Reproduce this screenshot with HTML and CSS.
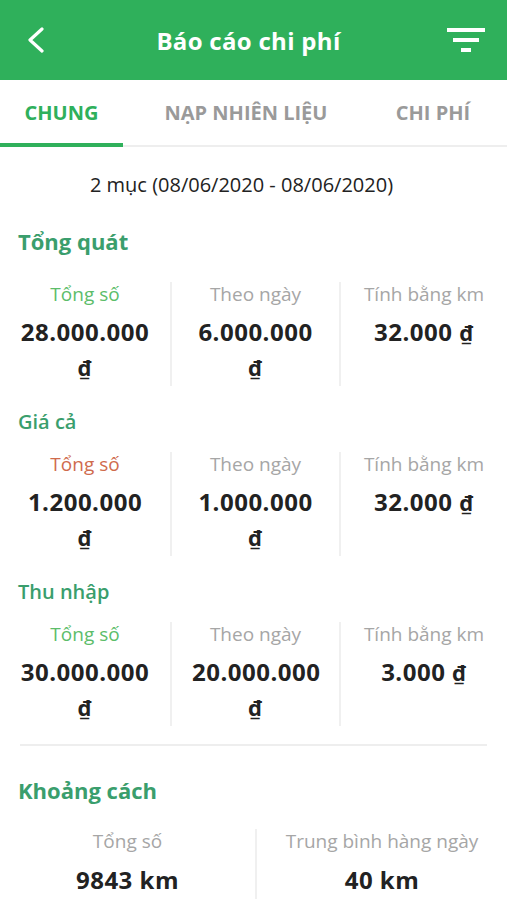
FILE: index.html
```html
<!DOCTYPE html>
<html lang="vi">
<head>
    <meta charset="UTF-8">
    <meta name="viewport" content="width=device-width, initial-scale=1.0">
    <title>Báo cáo chi phí</title>
    <link rel="stylesheet" href="styles.css">
</head>
<body>
    <header class="topbar">
        <svg class="back" width="20" height="26" viewBox="0 0 20 26">
            <path d="M16 2 L4 13 L16 24" fill="none" stroke="#fff" stroke-width="3.2" stroke-linecap="round" stroke-linejoin="round"/>
        </svg>
        <h1>Báo cáo chi phí</h1>
        <svg class="filter" width="40" height="26" viewBox="0 0 40 26">
            <rect x="0" y="0" width="38" height="4" fill="#fff"/>
            <rect x="6" y="10" width="26" height="4" fill="#fff"/>
            <rect x="14" y="20" width="10" height="4" fill="#fff"/>
        </svg>
    </header>

    <nav class="tabs">
        <div class="tab active">CHUNG</div>
        <div class="tab">NẠP NHIÊN LIỆU</div>
        <div class="tab">CHI PHÍ</div>
    </nav>

    <p class="range">2 mục (08/06/2020 - 08/06/2020)</p>

    <h2 class="section-title">Tổng quát</h2>
    <div class="stats">
        <div class="stat">
            <div class="label green">Tổng số</div>
            <div class="value">28.000.000 <span class="cur">₫</span></div>
        </div>
        <div class="stat">
            <div class="label">Theo ngày</div>
            <div class="value">6.000.000 <span class="cur">₫</span></div>
        </div>
        <div class="stat">
            <div class="label">Tính bằng km</div>
            <div class="value">32.000 <span class="cur">₫</span></div>
        </div>
    </div>

    <h3 class="sub-title">Giá cả</h3>
    <div class="stats">
        <div class="stat">
            <div class="label red">Tổng số</div>
            <div class="value">1.200.000 <span class="cur">₫</span></div>
        </div>
        <div class="stat">
            <div class="label">Theo ngày</div>
            <div class="value">1.000.000 <span class="cur">₫</span></div>
        </div>
        <div class="stat">
            <div class="label">Tính bằng km</div>
            <div class="value">32.000 <span class="cur">₫</span></div>
        </div>
    </div>

    <h3 class="sub-title">Thu nhập</h3>
    <div class="stats">
        <div class="stat">
            <div class="label green">Tổng số</div>
            <div class="value">30.000.000 <span class="cur">₫</span></div>
        </div>
        <div class="stat">
            <div class="label">Theo ngày</div>
            <div class="value">20.000.000 <span class="cur">₫</span></div>
        </div>
        <div class="stat">
            <div class="label">Tính bằng km</div>
            <div class="value">3.000 <span class="cur">₫</span></div>
        </div>
    </div>

    <hr class="sep">

    <h2 class="section-title">Khoảng cách</h2>
    <div class="stats two">
        <div class="stat">
            <div class="label">Tổng số</div>
            <div class="value">9843 km</div>
        </div>
        <div class="stat">
            <div class="label">Trung bình hàng ngày</div>
            <div class="value">40 km</div>
        </div>
    </div>
</body>
</html>
```

FILE: styles.css
```css
body {
    margin: 0;
    font-family: "Open Sans", "Noto Sans", sans-serif;
    background-color: #fff;
    color: #222;
}
.topbar {
    height: 80px;
    background-color: #2fb05b;
    display: flex;
    align-items: center;
    justify-content: space-between;
    padding: 0 20px 0 26px;
}
.topbar h1 {
    margin: 0;
    color: #fff;
    font-size: 24px;
    font-weight: 700;
    letter-spacing: 0.3px;
    position: relative;
    left: 2px;
}
.back {
    display: block;
}
.filter {
    display: block;
    margin-top: 2px;
}
.tabs {
    display: flex;
    height: 65px;
    border-bottom: 2px solid #eeeeee;
}
.tab {
    display: flex;
    align-items: center;
    justify-content: center;
    font-size: 20px;
    font-weight: 700;
    color: #9a9a9a;
    border-bottom: 4px solid transparent;
    margin-bottom: -2px;
    padding-top: 2px;
}
.tab:nth-child(1) {
    flex: 0 0 123px;
}
.tab:nth-child(2) {
    flex: 0 0 246px;
}
.tab:nth-child(3) {
    flex: 1;
    padding-right: 10px;
}
.tab.active {
    color: #2fb05b;
    border-bottom-color: #2fb05b;
}
.range {
    margin: 26px 0 0;
    text-align: center;
    font-size: 20px;
    line-height: 24px;
    position: relative;
    left: -12px;
}
.section-title {
    margin: 30px 18px 0;
    font-size: 22px;
    line-height: 28px;
    font-weight: 700;
    color: #3a9e6d;
}
.sep + .section-title {
    margin-top: 30px;
}
.sub-title {
    margin: 23px 18px 0;
    font-size: 20px;
    line-height: 26px;
    font-weight: 600;
    color: #3a9e6d;
}
.stats {
    display: grid;
    grid-template-columns: 172px 169px 1fr;
    margin-top: 17px;
}
.section-title + .stats {
    margin-top: 27px;
}
.stats.two {
    grid-template-columns: 257px 1fr;
    margin-top: 25px;
}
.stat {
    text-align: center;
    border-right: 2px solid #f0f0f0;
    padding: 0 20px;
    min-height: 104px;
}
.stats.two .stat {
    min-height: 70px;
}
.stat:last-child {
    border-right: none;
}
.label {
    font-size: 19px;
    line-height: 24px;
    color: #a6a6a6;
}
.label.green {
    color: #5cbd6a;
}
.label.red {
    color: #cf6b4d;
}
.value {
    font-size: 24px;
    font-weight: 700;
    line-height: 35px;
    letter-spacing: 0.5px;
    margin-top: 8px;
    color: #222;
}
.stats.two .value {
    margin-top: 9px;
}
.cur {
    font-size: 22px;
}
.sep {
    border: none;
    border-top: 2px solid #eeeeee;
    margin: 18px 20px 0;
}
```
